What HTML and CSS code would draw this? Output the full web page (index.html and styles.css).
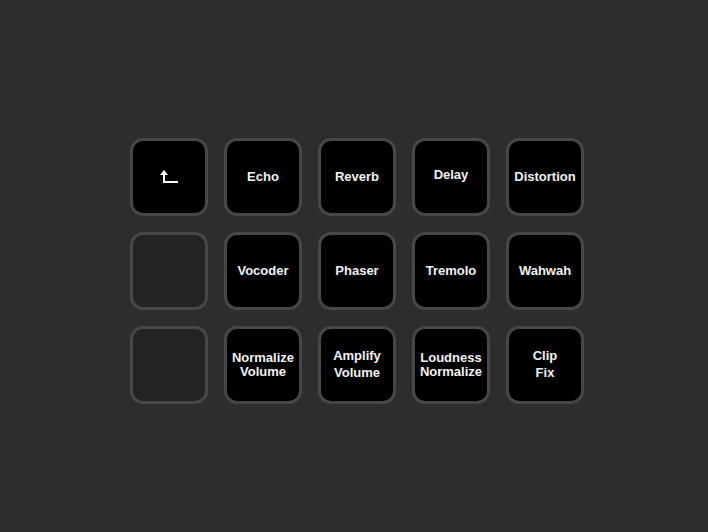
FILE: index.html
```html
<!DOCTYPE html>
<html>
<head>
<meta charset="utf-8">
<link rel="stylesheet" href="styles.css">
</head>
<body>
<div class="grid">
  <div class="key"><svg class="icon" width="20" height="16" viewBox="0 0 20 16"><path d="M5 1 L1 6 L9 6 Z" fill="#fff"/><path d="M5 5 V13 H19" fill="none" stroke="#fff" stroke-width="2"/></svg></div>
  <div class="key">Echo</div>
  <div class="key">Reverb</div>
  <div class="key up">Delay</div>
  <div class="key">Distortion</div>
  <div class="key empty"></div>
  <div class="key">Vocoder</div>
  <div class="key">Phaser</div>
  <div class="key">Tremolo</div>
  <div class="key">Wahwah</div>
  <div class="key empty"></div>
  <div class="key">Normalize<br>Volume</div>
  <div class="key tall">Amplify<br>Volume</div>
  <div class="key">Loudness<br>Normalize</div>
  <div class="key tall">Clip<br>Fix</div>
</div>
</body>
</html>
```
FILE: styles.css
```css
html, body {
  margin: 0;
  height: 100%;
  background: #2d2d2d;
}
.grid {
  display: grid;
  grid-template-columns: repeat(5, 78px);
  grid-auto-rows: 78px;
  gap: 16px;
  padding: 138px 0 0 130px;
}
.key {
  box-sizing: border-box;
  border: 3px solid #474747;
  border-radius: 13px;
  background: #000;
  color: #f2f2f2;
  font-family: "Liberation Sans", Arial, sans-serif;
  font-weight: bold;
  font-size: 13px;
  line-height: 14px;
  text-align: center;
  display: flex;
  align-items: center;
  justify-content: center;
}
.key.empty {
  background: #232323;
}
.key.up {
  padding-bottom: 4px;
}
.key.tall {
  line-height: 17px;
  padding-bottom: 2px;
}
.icon {
  display: block;
  margin-left: 0;
}
```
